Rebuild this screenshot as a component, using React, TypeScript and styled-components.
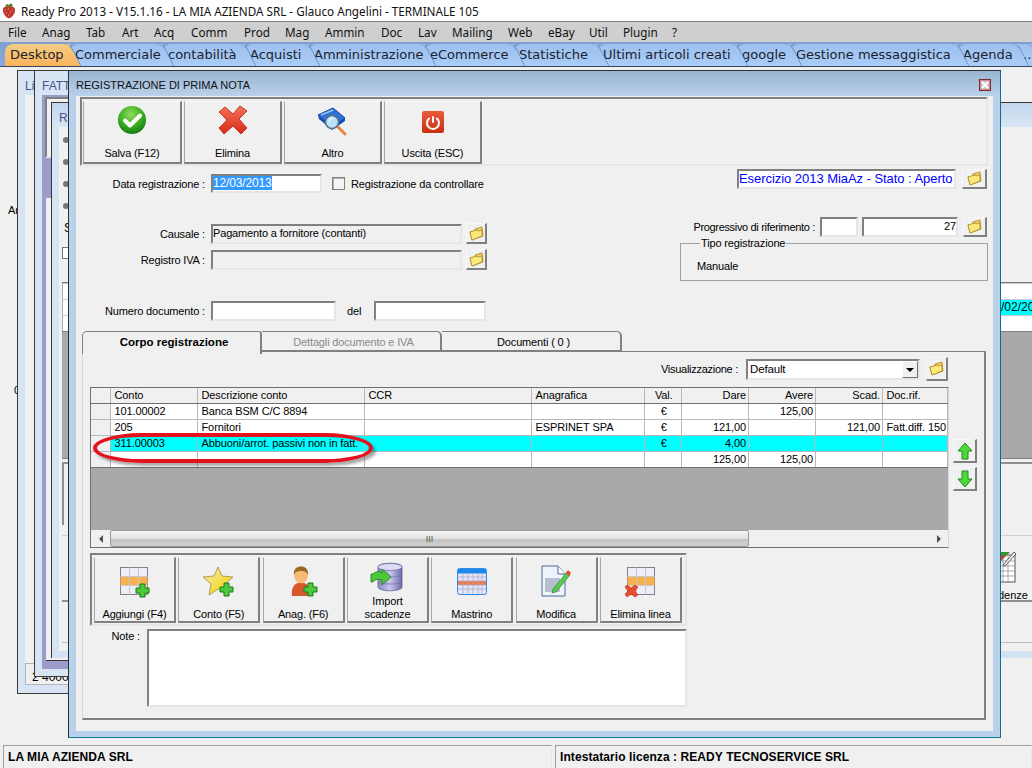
import React from 'react'
import styled, { createGlobalStyle } from 'styled-components'

const GlobalStyle = createGlobalStyle`
  html, body { margin: 0; padding: 0; background: #f0f0f0; }
  body { font-family: "Liberation Sans", Arial, sans-serif; font-size: 11px; color: #000; }
`

const FORM_FONT = `"Liberation Sans", Arial, sans-serif`
const SUNKEN = `border: 2px solid; border-color: #808080 #e6e6e6 #e6e6e6 #808080;`

const Screen = styled.div`
  width: 1032px;
  height: 768px;
  display: flex;
  flex-direction: column;
  overflow: hidden;
  background: #f0f0f0;
`

const TitleBar = styled.div`
  height: 21px;
  flex: none;
  display: flex;
  align-items: center;
  gap: 5px;
  padding-left: 2px;
  background: #fff;
  font: 11.7px "Noto Sans", sans-serif;
  color: #111;
`

const MenuBar = styled.div`
  height: 21px;
  flex: none;
  box-sizing: border-box;
  display: flex;
  align-items: center;
  padding-left: 8px;
  background: #cfcfcf;
  border-top: 1px solid #808080;
  font: 11.7px "Noto Sans", sans-serif;
  color: #111;
`

const MenuItem = styled.span<{ $w: number }>`
  width: ${p => p.$w}px;
  flex: none;
`

const TabBar = styled.div`
  height: 25px;
  flex: none;
  display: flex;
  align-items: flex-end;
  padding-left: 5px;
  overflow: hidden;
  box-sizing: border-box;
  border-bottom: 1px solid #39475c;
  background: linear-gradient(#7f9fd2, #86a8de);
  font: 13px "DejaVu Sans", Verdana, sans-serif;
  color: #1c2230;
`

const Tab = styled.div<{ $w: number; $order: number; $active?: boolean }>`
  position: relative;
  z-index: ${p => (p.$active ? 100 : 50 - p.$order)};
  width: ${p => p.$w}px;
  height: 22px;
  flex: none;
  box-sizing: border-box;
  padding: 2px 0 0 5px;
  line-height: 18px;
  white-space: nowrap;
  border-radius: 8px 0 0 0;
  background: ${p =>
    p.$active ? 'linear-gradient(#f2cd84, #fbb45c)' : 'linear-gradient(#9fc0ec, #a8cdf8)'};
  &::after {
    content: '';
    position: absolute;
    top: 0;
    bottom: 0;
    right: -6px;
    width: 14px;
    z-index: -1;
    transform: skewX(26deg);
    border-radius: 0 7px 0 0;
    border-right: 1px solid #5d7fb5;
    background: inherit;
  }
`

const Desktop = styled.div`
  position: relative;
  height: 678px;
  flex: none;
  overflow: hidden;
`

const DesktopLabel = styled.span<{ $top: number; $left: number }>`
  position: absolute;
  top: ${p => p.$top}px;
  left: ${p => p.$left}px;
`

const BackWindow = styled.div<{ $left: number; $top: number; $w: number; $h: number }>`
  position: absolute;
  left: ${p => p.$left}px;
  top: ${p => p.$top}px;
  width: ${p => p.$w}px;
  height: ${p => p.$h}px;
  box-sizing: border-box;
  border: 1px solid #3a3a3a;
  background: #d6e4f4;
  padding: 0 7px 8px 7px;
  display: flex;
  flex-direction: column;
`

const BackTitle = styled.div`
  height: 24px;
  flex: none;
  line-height: 30px;
  color: #4a5488;
  font-size: 12px;
  white-space: nowrap;
`

const BackBody = styled.div`
  flex: 1;
  min-height: 0;
  background: #f0f0f0;
  position: relative;
`

const TotalBox = styled.div`
  position: absolute;
  left: 0;
  bottom: 0;
  width: 400px;
  height: 22px;
  box-sizing: border-box;
  border: 1px solid #b5b5b5;
  padding: 6px 0 0 6px;
  font-size: 12px;
`

const PurpleArea = styled.div<{ $h: number }>`
  position: absolute;
  left: 7px;
  top: 24px;
  width: 900px;
  height: ${p => p.$h}px;
  background: #9c9ccb;
`

const InnerFrame = styled.div`
  position: absolute;
  left: 3px;
  top: 2px;
  width: 800px;
  height: 61px;
  box-sizing: border-box;
  background: #f0f0f0;
  ${SUNKEN}
`

const InnerPane = styled.div`
  position: absolute;
  left: 4px;
  top: 103px;
  right: 0;
  bottom: 8px;
  box-sizing: border-box;
  background: #f0f0f0;
  border-bottom: 1px solid #333;
`

const ThirdWindow = styled.div`
  position: absolute;
  left: 51px;
  top: 35px;
  width: 1100px;
  height: 556px;
  box-sizing: border-box;
  border: 1px solid #3a3a3a;
  border-right: 0;
  border-bottom: 0;
  display: flex;
  flex-direction: column;
  background: #d6e4f4;
  padding: 0 0 0 7px;
`

const ThirdTitle = styled.div`
  height: 24px;
  flex: none;
  margin-left: -7px;
  padding-left: 7px;
  line-height: 30px;
  font-size: 12px;
  color: #4a5488;
  background: linear-gradient(#c2d6ec, #d8e6f5);
`

const ThirdBody = styled.div`
  flex: 1;
  background: #f0f0f0;
  padding-left: 3px;
  display: flex;
  flex-direction: column;
`

const RadioDot = styled.div`
  width: 6px;
  height: 6px;
  margin-left: 1px;
  margin-top: 16px;
  border-radius: 50%;
  background: #777;
  &:first-child {
    margin-top: 10px;
  }
`

const SliverLabel = styled.div`
  margin-top: 13px;
  margin-left: 2px;
  font-size: 12px;
  line-height: 12px;
`

const SliverCheck = styled.div`
  width: 9px;
  height: 10px;
  margin-top: 13px;
  border: 1px solid #777;
  border-right: 0;
  background: #fff;
`

const SliverGrid = styled.div`
  margin-top: 23px;
  border-top: 1px solid #777;
  background: #fff;
`

const SliverRow = styled.div<{ $cyan?: boolean }>`
  height: 16px;
  box-sizing: border-box;
  border-left: 1px solid #aaa;
  border-top: 1px solid #ccc;
  padding-left: 938px;
  font-size: 12px;
  line-height: 15px;
  white-space: nowrap;
  background: ${p => (p.$cyan ? 'linear-gradient(90deg, #fff 900px, #00ffff 900px)' : '#fff')};
`

const SliverGray = styled.div`
  height: 128px;
  box-sizing: border-box;
  background: #a9a9a9;
  border-top: 1px solid #808080;
  border-bottom: 1px solid #808080;
`

const SliverBox = styled.div`
  margin-top: 3px;
  height: 63px;
  box-sizing: border-box;
  border-top: 2px solid #909090;
  border-left: 2px solid #909090;
`

const SliverTools = styled.div`
  margin-top: 10px;
  height: 67px;
  box-sizing: border-box;
  border-top: 1px solid #d0d0d0;
  border-bottom: 2px solid #909090;
  padding: 15px 0 0 936px;
`

const SliverLabelRight = styled.div`
  margin-top: 4px;
  font-size: 11px;
`

const SliverNote = styled.div`
  height: 41px;
  box-sizing: border-box;
  border-bottom: 1px solid #bdbdbd;
`

const SliverBand = styled.div`
  margin-top: 8px;
  height: 7px;
  margin-left: -10px;
  background: #d3e2f3;
`

const Dialog = styled.div`
  position: absolute;
  left: 68px;
  top: 3px;
  width: 933px;
  height: 668px;
  box-sizing: border-box;
  z-index: 10;
  border: 1px solid #2a3338;
  border-bottom-color: #0f7f93;
  border-right-color: #0f6f83;
  background: #b9d1ea;
  display: flex;
  flex-direction: column;
  padding: 0 7px 6px 7px;
  font-family: ${FORM_FONT};
  font-size: 11px;
`

const DialogTitle = styled.div`
  height: 25px;
  flex: none;
  box-sizing: border-box;
  margin: 0 -7px;
  padding: 3px 9px 0 7px;
  display: flex;
  align-items: center;
  justify-content: space-between;
  background: linear-gradient(#99b4d1, #b9d1ea);
  font-size: 11px;
  color: #111;
`

const CloseBox = styled.div`
  width: 12px;
  height: 12px;
  box-sizing: border-box;
  border: 1px solid #7a2a2a;
  background: #b9c4d0;
  box-shadow: inset 0 0 0 1px #d88;
  display: flex;
  align-items: center;
  justify-content: center;
`

const DialogBody = styled.div`
  flex: 1;
  background: #f0f0f0;
  padding: 1px 5px 11px 4px;
  display: flex;
  flex-direction: column;
  letter-spacing: -0.15px;
`

const Toolbar = styled.div`
  height: 69px;
  flex: none;
  box-sizing: border-box;
  ${SUNKEN}
  padding: 2px 0 0 1px;
  display: grid;
  grid-template-columns: 99px 98px 98px 98px;
  gap: 2px;
  align-content: start;
`

const IconBtn = styled.div<{ $h: number; $w?: number; $top?: number; $bottom?: number }>`
  width: ${p => (p.$w ? `${p.$w}px` : 'auto')};
  height: ${p => p.$h}px;
  box-sizing: border-box;
  border: 2px solid;
  border-color: #f8f8f8 #808080 #808080 #a8a8a8;
  border-top-width: 1px;
  border-left-width: 1px;
  padding: ${p => p.$top ?? 6}px 0 ${p => p.$bottom ?? 2}px;
  display: flex;
  flex-direction: column;
  align-items: center;
  text-align: center;
  line-height: 13px;
  background: #f0f0f0;
`

const BtnLabel = styled.div`
  margin-top: auto;
  white-space: nowrap;
`

const TopForm = styled.div`
  display: flex;
  justify-content: space-between;
  align-items: flex-start;
`

const LeftCol = styled.div`
  display: flex;
  flex-direction: column;
`

const RightCol = styled.div`
  display: flex;
  flex-direction: column;
  align-items: flex-end;
`

const FieldRow = styled.div<{ $mt?: number; $mr?: number }>`
  display: flex;
  align-items: center;
  margin-top: ${p => p.$mt ?? 0}px;
  margin-right: ${p => p.$mr ?? 0}px;
`

const FieldLabel = styled.label<{ $w?: number; $mr?: number; $tight?: boolean }>`
  width: ${p => p.$w ?? 125}px;
  flex: none;
  text-align: right;
  margin-right: ${p => p.$mr ?? 6}px;
  white-space: nowrap;
  letter-spacing: ${p => (p.$tight ? '-0.33px' : 'inherit')};
`

const DelLabel = styled.label`
  margin: 0 13px 0 11px;
  flex: none;
`

const Field = styled.div<{ $w: number; $h?: number; $bg?: string; $right?: boolean; $ml?: number }>`
  width: ${p => p.$w}px;
  height: ${p => p.$h ?? 20}px;
  margin-left: ${p => p.$ml ?? 0}px;
  flex: none;
  box-sizing: border-box;
  ${SUNKEN}
  background: ${p => p.$bg ?? '#fff'};
  padding: 0;
  line-height: 14px;
  text-align: ${p => (p.$right ? 'right' : 'left')};
  white-space: nowrap;
  overflow: hidden;
`

const Selected = styled.span`
  background: #3399ff;
  color: #fff;
  font-size: 12px;
`

const CheckBox = styled.div`
  width: 11px;
  height: 11px;
  margin: 0 6px 0 10px;
  border: 1px solid #808080;
  background: #f4f4f4;
  box-shadow: inset 1px 1px 0 #b0b0b0;
`

const YearField = styled(Field)`
  color: #0000ff;
  font-size: 13px;
  letter-spacing: -0.05px;
  line-height: 16px;
`

const FolderBtn = styled.div<{ $w: number; $h: number; $ml?: number }>`
  width: ${p => p.$w}px;
  height: ${p => p.$h}px;
  margin-left: ${p => p.$ml ?? 4}px;
  flex: none;
  box-sizing: border-box;
  border: 1px solid;
  border-color: #f8f8f8 #808080 #808080 #f8f8f8;
  border-right-width: 2px;
  border-bottom-width: 2px;
  display: flex;
  align-items: center;
  justify-content: center;
  background: #f0f0f0;
`

const GroupBox = styled.fieldset`
  width: 308px;
  height: 44px;
  margin: 0;
  padding: 10px 0 0 16px;
  box-sizing: border-box;
  border: 1px solid #a0a0a0;
  line-height: 13px;
  legend {
    margin-left: 3px;
    padding: 0 1px;
    font-size: 11px;
    line-height: 13px;
  }
`

const TabStrip = styled.div`
  display: flex;
  margin: 10px 0 0 2px;
  height: 21px;
  flex: none;
  position: relative;
  z-index: 1;
`

const FormTab = styled.div<{ $active?: boolean; $disabled?: boolean }>`
  width: 180px;
  box-sizing: border-box;
  padding-left: 5px;
  text-align: center;
  line-height: 20px;
  font-size: ${p => (p.$active ? '11.5px' : '11px')};
  letter-spacing: ${p => (p.$active ? '0' : '-0.15px')};
  font-weight: ${p => (p.$active ? 700 : 400)};
  color: ${p => (p.$disabled ? '#8a8a8a' : '#000')};
  background: #f0f0f0;
  border: 1px solid #808080;
  border-width: 1px 2px ${p => (p.$active ? 0 : '2px')} ${p => (p.$active ? '1px' : 0)};
  border-radius: ${p => (p.$active ? '5px 3px' : '0 5px')} 0 0;
  height: ${p => (p.$active ? 23 : 21)}px;
`

const TabPanel = styled.div`
  flex: 1;
  margin: -1px 2px 0 2px;
  box-sizing: border-box;
  border: 2px solid #808080;
  border-left: 1px solid #d8d8d8;
  border-top-width: 1px;
  padding: 5px 0 0 7px;
  display: flex;
  flex-direction: column;
`

const VizRow = styled.div`
  height: 24px;
  width: 858px;
  display: flex;
  justify-content: flex-end;
  align-items: center;
  flex: none;
`

const VizLabel = styled.span`
  letter-spacing: -0.28px;
`

const SelectBox = styled(Field)`
  position: relative;
  padding-left: 2px;
  line-height: 17px;
  font-size: 11.5px;
`

const SelectArrow = styled.div`
  position: absolute;
  top: 0;
  right: 0;
  width: 16px;
  bottom: 0;
  box-sizing: border-box;
  border: 1px solid;
  border-color: #fff #707070 #707070 #fff;
  background: #f0f0f0;
  &::after {
    content: '';
    position: absolute;
    left: 3px;
    top: 6px;
    border: 4px solid transparent;
    border-top: 4px solid #000;
    border-bottom: 0;
  }
`

const GridRow = styled.div`
  display: flex;
  margin-top: 6px;
  align-items: flex-start;
  position: relative;
`

const DataGrid = styled.div`
  width: 859px;
  height: 161px;
  flex: none;
  box-sizing: border-box;
  border: 1px solid #707070;
  border-right-color: #d8d8d8;
  background: #a9a9a9;
  display: flex;
  flex-direction: column;
  font-size: 11px;
`

const GridLine = styled.div<{ $kind?: 'head' | 'cyan' | 'last' }>`
  display: grid;
  grid-template-columns: 20px 87px 167px 167px 113px 37px 67px 67px 67px 65px;
  height: 16px;
  box-sizing: border-box;
  flex: none;
  border-bottom: 1px solid ${p => (p.$kind === 'head' || p.$kind === 'last' ? '#707070' : '#b8b8b8')};
  background: ${p => (p.$kind === 'head' ? '#f0f0f0' : p.$kind === 'cyan' ? '#00ffff' : '#fff')};
`

const Cell = styled.div<{ $align?: string; $indicator?: boolean }>`
  box-sizing: border-box;
  padding: 0 2px 0 3.5px;
  line-height: 14px;
  overflow: hidden;
  white-space: nowrap;
  text-align: ${p => p.$align ?? 'left'};
  border-right: 1px solid #b8b8b8;
  background: ${p => (p.$indicator ? '#f0f0f0' : 'transparent')};
  letter-spacing: -0.1px;
`

const GrayFill = styled.div`
  flex: 1;
`

const HScroll = styled.div`
  height: 17px;
  flex: none;
  display: flex;
  background: #f0f0f0;
`

const ScrollEnd = styled.div<{ $w: number }>`
  width: ${p => p.$w}px;
  flex: none;
  display: flex;
  align-items: center;
  justify-content: center;
`

const Arrowhead = styled.div<{ $dir: 'l' | 'r' }>`
  border: 4px solid transparent;
  ${p => (p.$dir === 'l' ? 'border-right: 4px solid #505050; border-left: 0;' : 'border-left: 4px solid #505050; border-right: 0;')}
`

const ScrollThumb = styled.div`
  width: 639px;
  flex: none;
  box-sizing: border-box;
  border: 1px solid #9a9a9a;
  border-radius: 2px;
  background: linear-gradient(#f4f4f4 0%, #e2e2e2 50%, #c4c4c4 55%, #cfcfcf 100%);
  display: flex;
  align-items: center;
  justify-content: center;
  color: #555;
  font-size: 9px;
  letter-spacing: 0;
`

const ScrollTrack = styled.div`
  flex: 1;
`

const ArrowCol = styled.div`
  display: flex;
  flex-direction: column;
  gap: 4px;
  margin: 52px 0 0 4px;
`

const ArrowBtn = styled.div`
  width: 24px;
  height: 24px;
  box-sizing: border-box;
  border: 1px solid;
  border-color: #f8f8f8 #808080 #808080 #f8f8f8;
  border-right-width: 2px;
  border-bottom-width: 2px;
  display: flex;
  align-items: center;
  justify-content: center;
`

const RedMark = styled.div`
  position: absolute;
  left: 3px;
  top: 46px;
  width: 280px;
  height: 30px;
  box-sizing: border-box;
  border: 4px solid #e4121c;
  border-radius: 48px / 15px;
  box-shadow: 3px 3px 3px rgba(60, 60, 60, 0.45);
  pointer-events: none;
`

const BottomTools = styled.div`
  width: 597px;
  height: 73px;
  margin-top: 5px;
  flex: none;
  box-sizing: border-box;
  ${SUNKEN}
  padding: 2px 0 0 2px;
  display: flex;
  gap: 2.33px;
`

const NoteRow = styled.div`
  display: flex;
  margin-top: 3px;
`

const NoteLabel = styled.div`
  width: 50px;
  text-align: right;
  margin-right: 7px;
  padding-top: 1px;
`

const StatusBar = styled.div`
  height: 23px;
  flex: none;
  display: flex;
  gap: 3px;
  padding-left: 3px;
`

const StatusCell = styled.div<{ $w: number }>`
  width: ${p => p.$w}px;
  flex: none;
  box-sizing: border-box;
  border-top: 1px solid #a0a0a0;
  border-left: 1px solid #a0a0a0;
  border-right: 1px solid #e8e8e8;
  padding-left: 4px;
  font: bold 12px/23px "Liberation Sans", Arial, sans-serif;
  letter-spacing: 0.08px;
  white-space: nowrap;
`

/* ---- icons ---- */

const Strawberry = () => (
  <svg width="14" height="17" viewBox="0 0 14 17">
    <path d="M7 16.5C3 15 .5 10.5 1 7c.4-2 3-3 6-3s5.600 1 6 3c.5 3.500-2 8-6 9.500z" fill="#c0352c" />
    <path d="M3 8h1M6 7h1M10 8h1M4 11h1M8 10h1M6 13h1" stroke="#f0a090" strokeWidth="1" />
    <path d="M3 4l2-2 2 1 2-2 2 3-4 1.500z" fill="#5c7a2a" />
  </svg>
)

const CheckIcon = () => (
  <svg width="30" height="30" viewBox="0 0 30 30">
    <defs>
      <radialGradient id="chk" cx="45%" cy="30%" r="75%">
        <stop offset="0" stopColor="#8fdc5a" />
        <stop offset="0.6" stopColor="#35a920" />
        <stop offset="1" stopColor="#0f6f10" />
      </radialGradient>
    </defs>
    <circle cx="15" cy="15" r="14" fill="url(#chk)" />
    <path d="M8 15.500l5 5 10-10" fill="none" stroke="#fff" strokeWidth="4" strokeLinecap="round" strokeLinejoin="round" />
  </svg>
)

const CrossIcon = () => (
  <svg width="30" height="30" viewBox="0 0 30 30">
    <defs>
      <linearGradient id="crs" x1="0" y1="0" x2="0" y2="1">
        <stop offset="0" stopColor="#f9705a" />
        <stop offset="1" stopColor="#d42c18" />
      </linearGradient>
    </defs>
    <path d="M7 2l8 7 7-8 7 5-8 8 8 9-6 6-8-8-9 8-5-6 8-8-8-8z" fill="url(#crs)" stroke="#c03a26" strokeWidth="1" strokeLinejoin="round" />
  </svg>
)

const BookIcon = () => (
  <svg width="32" height="30" viewBox="0 0 32 30">
    <path d="M1 8L16 1l12 10-13 9z" fill="#2f72d8" stroke="#12409a" />
    <path d="M1 8l1 4 13 11 13-9v-3L15 20z" fill="#0f4fae" />
    <path d="M4 8l12-5" stroke="#9ac4f4" strokeWidth="1.500" />
    <path d="M20 19l8 8" stroke="#e8874a" strokeWidth="3" strokeLinecap="round" />
    <circle cx="15" cy="15" r="6.500" fill="#bfe2f8" stroke="#5a7488" strokeWidth="1.500" />
    <path d="M12 14a4 4 0 0 1 4-3" stroke="#fff" fill="none" />
  </svg>
)

const PowerIcon = () => (
  <svg width="24" height="24" viewBox="0 0 24 24">
    <defs>
      <linearGradient id="pwr" x1="0" y1="0" x2="0" y2="1">
        <stop offset="0" stopColor="#ea5a3c" />
        <stop offset="1" stopColor="#c8300f" />
      </linearGradient>
    </defs>
    <rect x="1" y="1" width="22" height="22" rx="2" fill="url(#pwr)" />
    <path d="M8 8a6 6 0 1 0 8 0" fill="none" stroke="#fff" strokeWidth="2" strokeLinecap="round" transform="translate(0 .5)" />
    <path d="M12 7v5" stroke="#fff" strokeWidth="2" strokeLinecap="round" />
  </svg>
)

const FolderIcon = () => (
  <svg width="15" height="15" viewBox="0 0 15 15">
    <path d="M1 6l5-1V3l7-2 1 9-11 4z" fill="#f3d25c" stroke="#a98218" strokeWidth="0.800" />
    <path d="M1 6l7-2 1 1 4-1v6l-10 4z" fill="#fbe97e" stroke="#b08a1c" strokeWidth="0.800" />
  </svg>
)

const PlusBadge = ({ x, y }: { x: number; y: number }) => (
  <path
    d={`M${x + 4} ${y}h5v4h4v5h-4v4h-5v-4h-4v-5h4z`}
    fill="#4cc83c"
    stroke="#1c7a18"
    strokeWidth="1"
  />
)

const TableCells = ({ size, x, y }: { size: number; x: number; y: number }) => (
  <>
    <rect x={x} y={y} width={size * 3} height={size * 3} fill="#eeeefa" stroke="#808080" />
    <rect x={x} y={y + size} width={size * 3} height={size} fill="#f8b050" />
    <path
      d={`M${x + size} ${y}v${size * 3}M${x + size * 2} ${y}v${size * 3}M${x} ${y + size}h${size * 3}M${x} ${y + size * 2}h${size * 3}`}
      stroke="#c8c8c8"
      strokeWidth="1"
      fill="none"
    />
  </>
)

const TablePlusIcon = () => (
  <svg width="32" height="32" viewBox="0 0 32 32">
    <TableCells size={9} x={1.5} y={1.5} />
    <PlusBadge x={17} y={18} />
  </svg>
)

const TableCrossIcon = () => (
  <svg width="32" height="32" viewBox="0 0 32 32">
    <TableCells size={9} x={3.500} y={1.500} />
    <path d="M3 19l4 3 4-3 3 2-3 4 3 4-3 2-4-3-4 3-2-3 3-3-3-4z" fill="#ec4a30" stroke="#b83018" strokeWidth="0.600" />
  </svg>
)

const StarPlusIcon = () => (
  <svg width="32" height="32" viewBox="0 0 32 32">
    <defs>
      <linearGradient id="str" x1="0" y1="0" x2="1" y2="1">
        <stop offset="0" stopColor="#f6e6b0" />
        <stop offset="0.6" stopColor="#f6dc44" />
        <stop offset="1" stopColor="#e8c428" />
      </linearGradient>
    </defs>
    <path d="M15 1l4 9 11 1-8 7 2 10-9-5-9 6 2-11-8-7 11-1z" fill="url(#str)" stroke="#a08a3c" strokeWidth="0.800" />
    <PlusBadge x={17} y={17} />
  </svg>
)

const UserPlusIcon = () => (
  <svg width="32" height="32" viewBox="0 0 32 32">
    <path d="M5 30c-1-8 2-12 6-13h6c4 1 7 5 6 13z" fill="#d8582c" />
    <ellipse cx="14" cy="9" rx="7" ry="8.500" fill="#f8b878" />
    <path d="M7 9c-1-6 3-8.500 7-8.500s8 2.500 7 8.500c-1-3-3-4-7-4s-6 1-7 4z" fill="#9a6a24" />
    <PlusBadge x={17} y={17} />
  </svg>
)

const DatabaseIcon = () => (
  <svg width="34" height="30" viewBox="0 0 34 30">
    <defs>
      <linearGradient id="dbg" x1="0" y1="0" x2="1" y2="0">
        <stop offset="0" stopColor="#8a88c8" />
        <stop offset="0.5" stopColor="#c8c8ec" />
        <stop offset="1" stopColor="#6c6aa8" />
      </linearGradient>
    </defs>
    <path d="M8 5c0-5 24-5 24 0v20c0 5-24 5-24 0z" fill="url(#dbg)" stroke="#55548a" strokeWidth="0.700" />
    <ellipse cx="20" cy="5" rx="12" ry="3.500" fill="#dcdcf4" stroke="#6c6aa8" strokeWidth="0.700" />
    <path d="M8 12c0 4 24 4 24 0M8 19c0 4 24 4 24 0" stroke="#6c6aa8" strokeWidth="0.700" fill="none" />
    <path d="M1 12h2c3-3 7-3 9-1V7l9 8-9 8v-5c-3-1-7-1-9 2H1z" fill="#4cc83c" stroke="#1c7a18" strokeWidth="0.800" />
  </svg>
)

const LedgerIcon = () => (
  <svg width="30" height="27" viewBox="0 0 30 27">
    <rect x="0.500" y="0.500" width="29" height="26" rx="2" fill="#e4e4f4" stroke="#2c8ee8" />
    <rect x="1" y="1" width="28" height="4.500" fill="#1e88e8" />
    <rect x="1" y="13" width="28" height="4" fill="#f27a4a" />
    <path d="M1 9h28M1 13h28M1 17h28M1 21h28M6 5v21M11 5v21M16 5v21M21 5v21M25 5v21" stroke="#a8a8c8" strokeWidth="0.700" />
  </svg>
)

const DocPencilIcon = () => (
  <svg width="30" height="32" viewBox="0 0 30 32">
    <path d="M1 1h16l7 8v22H1z" fill="#eef3fb" stroke="#4a6a98" />
    <path d="M17 1v8h7" fill="#fff" stroke="#4a6a98" />
    <rect x="4" y="13" width="15" height="14" fill="#b4bfd0" />
    <path d="M12 24l14-17 3 3-14 17-4 1z" fill="#5ac850" stroke="#2a8a28" strokeWidth="0.700" />
    <path d="M25 8l2-3 3 3-2 3z" fill="#e24a2c" />
  </svg>
)

const UpArrow = () => (
  <svg width="16" height="18" viewBox="0 0 16 18">
    <path d="M8 1l7 8h-4v8H5V9H1z" fill="#4fd83a" stroke="#1f8a1c" />
  </svg>
)

const DownArrow = () => (
  <svg width="16" height="18" viewBox="0 0 16 18">
    <path d="M8 17l7-8h-4V1H5v8H1z" fill="#4fd83a" stroke="#1f8a1c" />
  </svg>
)

const ColorSheetIcon = () => (
  <svg width="18" height="32" viewBox="0 0 18 32">
    <rect x="0" y="4" width="17" height="27" fill="#fff" stroke="#555" />
    <path d="M0 10h17M0 15h17M0 20h17M0 25h17M5 4v27M10 4v27" stroke="#888" strokeWidth="0.700" />
    <path d="M0 1l12 0-12 12z" fill="#2a9a30" />
    <path d="M0 9l5-5h3L0 13z" fill="#e83030" />
    <path d="M5 14L16 1l2 2L7 15z" fill="#eee" stroke="#222" strokeWidth="0.700" />
  </svg>
)

/* ---- data ---- */

const MENU = [
  ['File', 34], ['Anag', 44], ['Tab', 36], ['Art', 32], ['Acq', 37], ['Comm', 53], ['Prod', 41], ['Mag', 40],
  ['Ammin', 56], ['Doc', 37], ['Lav', 34], ['Mailing', 56], ['Web', 40], ['eBay', 41], ['Util', 34], ['Plugin', 49], ['?', 20],
] as [string, number][]

const TABS = [
  ['Desktop', 65], ['Commerciale', 93], ['contabilità', 82], ['Acquisti', 64], ['Amministrazione', 116],
  ['eCommerce', 89], ['Statistiche', 84], ['Ultimi articoli creati', 139], ['google', 54],
  ['Gestione messaggistica', 167], ['Agenda', 60], ['..', 14],
] as [string, number][]

const ALIGN = [undefined, undefined, undefined, undefined, undefined, 'center', 'right', 'right', 'right', undefined]

const HEAD = ['', 'Conto', 'Descrizione conto', 'CCR', 'Anagrafica', 'Val.', 'Dare', 'Avere', 'Scad.', 'Doc.rif.']

const ROWS: { cells: string[]; kind?: 'cyan' | 'last' }[] = [
  { cells: ['', '101.00002', 'Banca BSM C/C 8894', '', '', '€', '', '125,00', '', ''] },
  { cells: ['', '205', 'Fornitori', '', 'ESPRINET SPA', '€', '121,00', '', '121,00', 'Fatt.diff. 150'] },
  { cells: ['', '311.00003', 'Abbuoni/arrot. passivi non in fatt.', '', '', '€', '4,00', '', '', ''], kind: 'cyan' },
  { cells: ['', '', '', '', '', '', '125,00', '125,00', '', ''], kind: 'last' },
]

const BOTTOM_TOOLS: { label: React.ReactNode; icon: React.ReactNode; top: number }[] = [
  { label: 'Aggiungi (F4)', icon: <TablePlusIcon />, top: 8 },
  { label: 'Conto (F5)', icon: <StarPlusIcon />, top: 8 },
  { label: 'Anag. (F6)', icon: <UserPlusIcon />, top: 8 },
  { label: <>Import<br />scadenze</>, icon: <DatabaseIcon />, top: 4 },
  { label: 'Mastrino', icon: <LedgerIcon />, top: 10 },
  { label: 'Modifica', icon: <DocPencilIcon />, top: 7 },
  { label: 'Elimina linea', icon: <TableCrossIcon />, top: 8 },
]

export default function App() {
  return (
    <>
      <GlobalStyle />
      <Screen>
        <TitleBar>
          <Strawberry />
          Ready Pro 2013 - V15.1.16 - LA MIA AZIENDA SRL - Glauco Angelini - TERMINALE 105
        </TitleBar>
        <MenuBar>
          {MENU.map(([label, w]) => (
            <MenuItem key={label} $w={w}>{label}</MenuItem>
          ))}
        </MenuBar>
        <TabBar>
          {TABS.map(([label, w], i) => (
            <Tab key={label} $w={w} $order={i} $active={i === 0}>{label}</Tab>
          ))}
        </TabBar>
        <Desktop>
          <DesktopLabel $left={8} $top={137}>Ar</DesktopLabel>
          <DesktopLabel $left={14} $top={317}>0</DesktopLabel>

          <BackWindow $left={17} $top={3} $w={900} $h={624}>
            <BackTitle>Li</BackTitle>
            <BackBody>
              <TotalBox>2 4000,00</TotalBox>
            </BackBody>
          </BackWindow>

          <BackWindow $left={34} $top={3} $w={900} $h={607}>
            <BackTitle>FATT</BackTitle>
            <PurpleArea $h={574}>
              <InnerFrame />
              <InnerPane />
            </PurpleArea>
          </BackWindow>

          <ThirdWindow>
            <ThirdTitle>RI</ThirdTitle>
            <ThirdBody>
              <RadioDot />
              <RadioDot />
              <RadioDot />
              <RadioDot />
              <SliverLabel>S</SliverLabel>
              <SliverCheck />
              <SliverGrid>
                <SliverRow />
                <SliverRow $cyan>/02/20</SliverRow>
                <SliverRow />
              </SliverGrid>
              <SliverGray />
              <SliverBox />
              <SliverTools>
                <ColorSheetIcon />
                <SliverLabelRight>denze</SliverLabelRight>
              </SliverTools>
              <SliverNote />
              <SliverBand />
            </ThirdBody>
          </ThirdWindow>

          <Dialog>
            <DialogTitle>
              REGISTRAZIONE DI PRIMA NOTA
              <CloseBox>
                <svg width="8" height="8" viewBox="0 0 8 8">
                  <path d="M1 1l6 6M7 1L1 7" stroke="#fff" strokeWidth="2" />
                </svg>
              </CloseBox>
            </DialogTitle>
            <DialogBody>
              <Toolbar>
                <IconBtn $h={63} $top={3}><CheckIcon /><BtnLabel>Salva (F12)</BtnLabel></IconBtn>
                <IconBtn $h={63} $top={3}><CrossIcon /><BtnLabel>Elimina</BtnLabel></IconBtn>
                <IconBtn $h={63} $top={5}><BookIcon /><BtnLabel>Altro</BtnLabel></IconBtn>
                <IconBtn $h={63} $top={8}><PowerIcon /><BtnLabel>Uscita (ESC)</BtnLabel></IconBtn>
              </Toolbar>

              <TopForm>
                <LeftCol>
                  <FieldRow $mt={8}>
                    <FieldLabel>Data registrazione :</FieldLabel>
                    <Field $w={111} $h={19}><Selected>12/03/2013</Selected></Field>
                    <CheckBox />
                    Registrazione da controllare
                  </FieldRow>
                  <FieldRow $mt={30}>
                    <FieldLabel>Causale :</FieldLabel>
                    <Field $w={251} $bg="#f0f0f0">Pagamento a fornitore (contanti)</Field>
                    <FolderBtn $w={21} $h={21}><FolderIcon /></FolderBtn>
                  </FieldRow>
                  <FieldRow $mt={5}>
                    <FieldLabel>Registro IVA :</FieldLabel>
                    <Field $w={251} $bg="#f0f0f0" />
                    <FolderBtn $w={21} $h={21}><FolderIcon /></FolderBtn>
                  </FieldRow>
                  <FieldRow $mt={31}>
                    <FieldLabel>Numero documento :</FieldLabel>
                    <Field $w={125} />
                    <DelLabel>del</DelLabel>
                    <Field $w={112} />
                  </FieldRow>
                </LeftCol>
                <RightCol>
                  <FieldRow $mt={3} $mr={1}>
                    <YearField $w={219} $h={20}>Esercizio 2013 MiaAz - Stato : Aperto</YearField>
                    <FolderBtn $w={25} $h={20} $ml={6}><FolderIcon /></FolderBtn>
                  </FieldRow>
                  <FieldRow $mt={28} $mr={1}>
                    <FieldLabel $w={130} $mr={5} $tight>Progressivo di riferimento :</FieldLabel>
                    <Field $w={38} />
                    <Field $w={96} $right $ml={4}>27</Field>
                    <FolderBtn $w={24} $h={20} $ml={5}><FolderIcon /></FolderBtn>
                  </FieldRow>
                  <GroupBox>
                    <legend>Tipo registrazione</legend>
                    Manuale
                  </GroupBox>
                </RightCol>
              </TopForm>

              <TabStrip>
                <FormTab $active>Corpo registrazione</FormTab>
                <FormTab $disabled>Dettagli documento e IVA</FormTab>
                <FormTab>Documenti ( 0 )</FormTab>
              </TabStrip>
              <TabPanel>
                <VizRow>
                  <VizLabel>Visualizzazione :</VizLabel>
                  <SelectBox $w={174} $h={21} $ml={8}>
                    Default
                    <SelectArrow />
                  </SelectBox>
                  <FolderBtn $w={22} $h={24} $ml={6}><FolderIcon /></FolderBtn>
                </VizRow>
                <GridRow>
                  <DataGrid>
                    <GridLine $kind="head">
                      {HEAD.map((h, i) => (
                        <Cell key={i} $align={ALIGN[i]}>{h}</Cell>
                      ))}
                    </GridLine>
                    {ROWS.map((row, r) => (
                      <GridLine key={r} $kind={row.kind}>
                        {row.cells.map((c, i) => (
                          <Cell key={i} $align={ALIGN[i]} $indicator={i === 0}>{c}</Cell>
                        ))}
                      </GridLine>
                    ))}
                    <GrayFill />
                    <HScroll>
                      <ScrollEnd $w={19}><Arrowhead $dir="l" /></ScrollEnd>
                      <ScrollThumb>III</ScrollThumb>
                      <ScrollTrack />
                      <ScrollEnd $w={19}><Arrowhead $dir="r" /></ScrollEnd>
                    </HScroll>
                  </DataGrid>
                  <ArrowCol>
                    <ArrowBtn><UpArrow /></ArrowBtn>
                    <ArrowBtn><DownArrow /></ArrowBtn>
                  </ArrowCol>
                  <RedMark />
                </GridRow>
                <BottomTools>
                  {BOTTOM_TOOLS.map((tool, i) => (
                    <IconBtn key={i} $h={66} $w={82} $top={tool.top} $bottom={0}>
                      {tool.icon}
                      <BtnLabel>{tool.label}</BtnLabel>
                    </IconBtn>
                  ))}
                </BottomTools>
                <NoteRow>
                  <NoteLabel>Note :</NoteLabel>
                  <Field $w={540} $h={78} />
                </NoteRow>
              </TabPanel>
            </DialogBody>
          </Dialog>
        </Desktop>
        <StatusBar>
          <StatusCell $w={549}>LA MIA AZIENDA SRL</StatusCell>
          <StatusCell $w={477}>Intestatario licenza : READY TECNOSERVICE SRL</StatusCell>
        </StatusBar>
      </Screen>
    </>
  )
}
